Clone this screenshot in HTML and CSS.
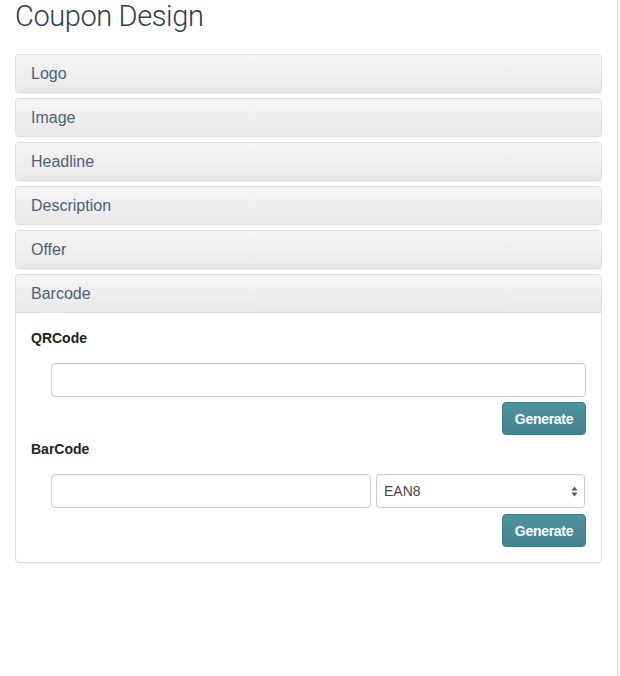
FILE: index.html
```html
<!DOCTYPE html>
<html lang="en">
<head>
    <meta charset="UTF-8">
    <title>Coupon Design</title>
    <link rel="stylesheet" href="styles.css">
</head>
<body>
    <div class="page">
        <h1 class="title">Coupon Design</h1>
        <div class="panel-group">
            <div class="panel"><div class="panel-heading">Logo</div></div>
            <div class="panel"><div class="panel-heading">Image</div></div>
            <div class="panel"><div class="panel-heading">Headline</div></div>
            <div class="panel"><div class="panel-heading">Description</div></div>
            <div class="panel"><div class="panel-heading">Offer</div></div>
            <div class="panel">
                <div class="panel-heading">Barcode</div>
                <div class="panel-body">
                    <label class="field-label">QRCode</label>
                    <div class="field-row">
                        <input class="form-control" type="text">
                    </div>
                    <div class="btn-row">
                        <button class="btn-generate">Generate</button>
                    </div>
                    <label class="field-label">BarCode</label>
                    <div class="field-row">
                        <input class="form-control wide" type="text">
                        <div class="select">
                            <span>EAN8</span>
                            <svg width="7" height="11" viewBox="0 0 7 11"><path d="M3.5 0.5 L6.5 4.5 L0.5 4.5 Z M3.5 10.5 L6.5 6.5 L0.5 6.5 Z" fill="#555"/></svg>
                        </div>
                    </div>
                    <div class="btn-row last">
                        <button class="btn-generate">Generate</button>
                    </div>
                </div>
            </div>
        </div>
    </div>
</body>
</html>
```

FILE: styles.css
```css
html, body {
    margin: 0;
    height: 100%;
}
body {
    background: #f6f6f6;
    font-family: "Liberation Sans", Arial, sans-serif;
    font-size: 14px;
    color: #333;
}
.page {
    box-sizing: border-box;
    width: 618px;
    min-height: 100%;
    padding: 0 15px;
    background: #fff;
    border-right: 1px solid #dcdcdc;
    overflow: hidden;
}
.title {
    margin: -1px 0 21px;
    font-family: Roboto, sans-serif;
    font-weight: 300;
    font-size: 29px;
    line-height: 34px;
    color: #2c3e50;
    letter-spacing: -0.4px;
}
.panel {
    border: 1px solid #dddddd;
    border-radius: 4px;
    margin-bottom: 5px;
    background: #fff;
    box-shadow: 0 1px 1px rgba(0, 0, 0, 0.04);
}
.panel-heading {
    height: 37px;
    line-height: 37px;
    padding: 0 15px;
    border-radius: 3px;
    background: linear-gradient(#f5f5f5, #e8e8e8);
    color: #4d6277;
    font-size: 16px;
}
.panel-body {
    border-top: 1px solid #dddddd;
    padding: 15px;
}
.panel:last-child .panel-heading {
    border-radius: 3px 3px 0 0;
}
.field-label {
    display: block;
    font-weight: bold;
    line-height: 20px;
    margin-bottom: 15px;
    color: #222;
}
.field-row {
    display: flex;
    gap: 5px;
    padding-left: 20px;
}
.form-control {
    box-sizing: border-box;
    flex: 1;
    height: 34px;
    border: 1px solid #ccc;
    border-radius: 4px;
    margin: 0;
    padding: 6px 12px;
    font: inherit;
    box-shadow: inset 0 1px 1px rgba(0, 0, 0, 0.05);
}
.form-control.wide {
    flex: 0 0 320px;
}
.select {
    box-sizing: border-box;
    flex: 1;
    height: 34px;
    margin-right: 1px;
    border: 1px solid #ccc;
    border-radius: 4px;
    display: flex;
    align-items: center;
    justify-content: space-between;
    padding: 0 6px 0 7px;
    color: #444;
    font-size: 14px;
}
.btn-row {
    display: flex;
    justify-content: flex-end;
    margin-top: 5px;
    margin-bottom: 4px;
}
.btn-row.last {
    margin-top: 6px;
    margin-bottom: 0;
}
.btn-generate {
    width: 84px;
    height: 33px;
    border: 1px solid #3b7a86;
    border-radius: 4px;
    background: linear-gradient(#4d929f, #44858f);
    color: #fff;
    font-family: "Liberation Sans", Arial, sans-serif;
    font-size: 14px;
    font-weight: bold;
    letter-spacing: -0.3px;
    padding: 0;
}
```
